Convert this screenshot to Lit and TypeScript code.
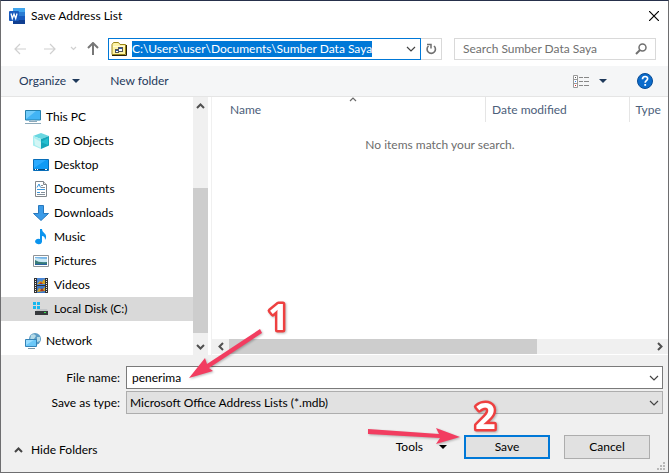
import { LitElement, html, css, svg } from "lit";
import { customElement, query } from "lit/decorators.js";
import { classMap } from "lit/directives/class-map.js";

const icon = (body: unknown, w = 16, h = 16) =>
  html`<svg class="icon" width=${w} height=${h} viewBox="0 0 ${w} ${h}" aria-hidden="true">${body}</svg>`;

const chevron = (d: string, w: number, h: number, cls = "") =>
  html`<svg class="icon ${cls}" width=${w} height=${h} viewBox="0 0 ${w} ${h}" aria-hidden="true"><path d=${d} fill="none" stroke="currentColor" stroke-width="1.200" /></svg>`;

const caret = () => icon(svg`<path d="M0 0h8L4 4z" fill="currentColor"/>`, 8, 4);
const comboArrow = () => chevron("M1 1l4 4 4-4", 10, 6, "combo");

const wordLogo = icon(svg`
  <path d="M4 0h12v4H4z" fill="#41a5ee"/><path d="M4 4h12v4H4z" fill="#2b7cd3"/>
  <path d="M4 8h12v4H4z" fill="#185abd"/><path d="M4 12h12v4H4z" fill="#103f91"/>
  <rect y="3" width="10" height="10" rx="1" fill="#185abd"/>
  <path d="M2 5.500l1.300 5L5 6l1.700 4.500L8 5.500" fill="none" stroke="#fff" stroke-width="1.300"/>`);

const sources = icon(svg`
  <path d="M1 13.500V3.500L2.500 1.500h5l1.500 2h5.500v10z" fill="#fdf3a4" stroke="#9b8518"/>
  <path d="M2 5h12v1H2z" fill="#fffbd9"/><path d="M1 14.500h14.500V4" fill="none" stroke="#28210a"/>
  <rect x="7.500" y="6.500" width="4" height="4" fill="#fff" stroke="#555"/>
  <rect x="4.500" y="8.500" width="3" height="3" fill="#fff" stroke="#555"/>
  <path d="M8 7.500h3M5 9.500h2" stroke="#2456b5"/>`);

const places = [
  { name: "This PC", root: true, art: svg`
    <path d="M.5 1.500h15v9.500H.5z" fill="#42b4f5" stroke="#2580ad"/><path d="M1 10L11 2H1z" fill="#72ccfb"/>
    <path d="M6 11h4v2H6z" fill="#a9c3d2"/><path d="M4 12.500h8M0 14.500h16" stroke="#8daabb"/>` },
  { name: "3D Objects", art: svg`
    <path d="M8 0l8 3-8 3-8-3z" fill="#69d7e1"/><path d="M0 3l8 3v10l-8-3.500z" fill="#a7eef0"/>
    <path d="M16 3L8 6v10l8-3.500z" fill="#16a5b9"/><path d="M1 5l7 4v6l-6-3z" fill="#d3f6f5"/><path d="M8 9l7-4v7z" fill="#24bfd0"/>` },
  { name: "Desktop", art: svg`
    <path d="M.5 2.500h15v11H.5z" fill="#0f9af5" stroke="#086db8"/><path d="M1 11L13 3H1z" fill="#2cabff"/>
    <path d="M1 12.500h14" stroke="#05467c"/><path d="M2 12.500h1m1 0h1m7 0h2" stroke="#fff"/>` },
  { name: "Documents", art: svg`
    <path d="M2.500.500h8l3 3v12h-11z" fill="#fff" stroke="#81868b"/><path d="M10.500.500v3h3" fill="#ddd" stroke="#81868b"/>
    <path d="M4 6.500l2-3.500 1.500 3.500M4 8.500h8M4 11.500h3" fill="none" stroke="#3a96dc"/><path d="M8 4.500h2M8 6.500h4M8 11.500h4M4 13.500h8" stroke="#84909b"/>` },
  { name: "Downloads", art: svg`<path d="M5.500.500h5v8h5L8 15.500.500 8.500h5z" fill="#3c9ce8" stroke="#2878bd"/>` },
  { name: "Music", art: svg`
    <path d="M7 0h2c0 4 5 4 4 9l-1 2c0-3-1-4-3-4v6a3.500 2.700 0 1 1-2-3z" fill="#0b94ee"/>` },
  { name: "Pictures", art: svg`
    <path d="M.5 2.500h15v11H.5z" fill="#fff" stroke="#8e9397"/><path d="M2 4h12v8H2z" fill="#79b7e8"/>
    <path d="M2 5q6 1 12 1v3H2z" fill="#cce9f5"/><path d="M2 7q4 3 12 2v3H2z" fill="#397c78"/><path d="M2 11h12v1H2z" fill="#2962a1"/>` },
  { name: "Videos", art: svg`
    <path d="M1 1h14v15H1z" fill="#333"/><path d="M4 1h8v7H4z" fill="#4a87d8"/><path d="M4 9h8v7H4z" fill="#3d78ca"/>
    <path d="M4 7l3-3 2 1 2-3 1 2v3zM4 15l2-4 3 2 3-3v4z" fill="#d6a422"/><path d="M8 5l2 2H6zm1 6l2 3H7z" fill="#ad3322"/>
    <path d="M2.500 2v13M13.500 2v13" stroke="#eee" stroke-dasharray="1 1"/>` },
  { name: "Local Disk (C:)", selected: true, art: svg`
    <path d="M0 1h3v3H0zm4 0h3v3H4zM0 5h3v3H0zm4 0h3v3H4z" fill="#16b7ef"/>
    <path d="M4 8h10l1 2H3z" fill="#c3c6c9"/><path d="M2 10h13v4H2z" fill="#373a3d"/><path d="M11 11.500h2" stroke="#38e452"/>` },
  { name: "Network", root: true, gap: true, art: svg`
    <circle cx="10" cy="6" r="6" fill="#5c9cc4"/><path d="M6 2q4-2 5 1l-2 3-4 1zM12 4l3 0v4l-3 1z" fill="#b5dbe8"/>
    <path d="M.5 6.500h11v7H.5z" fill="#6cc8f8" stroke="#3483b7"/><path d="M1 12l8-5H1z" fill="#99ddff"/>
    <path d="M3 15.500h7" stroke="#7795a6"/>` },
];

@customElement("app-root")
export class AppRoot extends LitElement {
  @query(".path") private path!: HTMLInputElement;

  static styles = css`
    :host { display: block; font: 12px/16px Lato, "Noto Sans", sans-serif; color: #000; }
    * { box-sizing: border-box; }
    button, input, select { font: inherit; color: inherit; margin: 0; padding: 0; border: 0; background: none; border-radius: 0; outline: none; }
    button { display: flex; align-items: center; }
    .icon { display: block; flex: none; }
    .dialog { display: flex; flex-direction: column; min-height: 100vh; border: 1px solid #6e6e70; border-top-color: #26304b; background: #fff; }
    .title { display: flex; align-items: center; gap: 6px; height: 30px; padding: 0 9px 0 8px; }
    h1 { flex: 1; margin: 0; font: inherit; }
    .nav { display: flex; align-items: center; height: 35px; padding: 0 12px 0 13px; color: #d0d0d0; }
    .arrows { display: flex; align-items: center; gap: 16px; width: 94px; }
    .arrows .recent { margin: 0 -6px 0 -2px; }
    .arrows .up { color: #777; }
    .address { display: flex; align-items: center; flex: 1; min-width: 0; height: 22px; border: 1px solid #0078d7; padding: 0 4px 0 2px; gap: 5px; color: #000; }
    .path { flex: 1; min-width: 0; height: 16px; }
    .path::selection { background: #0078d7; color: #fff; }
    .refresh { width: 21px; height: 22px; justify-content: center; border: 1px solid #d9d9d9; border-left: 0; color: #707070; }
    .search { display: flex; align-items: center; flex: 0 1 202px; min-width: 0; height: 22px; margin-left: 12px; padding: 0 8px; border: 1px solid #d9d9d9; color: #707070; }
    .search input { flex: 1; min-width: 0; }
    .search input::placeholder { color: #707070; opacity: 1; }
    .tools { display: flex; align-items: center; height: 31px; padding: 0 15px 0 18px; background: #f5f6f7; border-bottom: 1px solid #e5e5e5; color: #1e395b; }
    .tools button { gap: 6px; margin-right: 30px; }
    .tools .views { margin-left: auto; gap: 10px; }
    .tools .help { margin: 0; }
    .body { display: flex; flex: 1; min-height: 258px; }
    .side { display: flex; flex: none; width: 211px; padding-right: 3px; border-right: 1px solid #f0f0f0; }
    .tree { flex: 1; list-style: none; margin: 0; padding: 8px 0 2px; }
    .place { width: 100%; height: 24px; gap: 5px; padding-left: 32px; text-align: left; }
    .place.root { padding-left: 24px; }
    .place.selected { background: #d9d9d9; }
    .gap { margin-top: 8px; }
    .vbar { display: flex; flex-direction: column; width: 15px; background: #f0f0f0; color: #505050; }
    .vbar button { flex: none; justify-content: center; height: 17px; }
    .vtrack { display: flex; flex-direction: column; justify-content: flex-end; flex: 1; padding-bottom: 5px; }
    .vthumb { height: 66%; background: #cdcdcd; }
    .main { display: flex; flex: 1; flex-direction: column; min-width: 0; padding-bottom: 1px; }
    table { width: 100%; table-layout: fixed; border-collapse: collapse; color: #4c607a; }
    th { height: 25px; padding: 0 6px; font-weight: 400; text-align: left; border-right: 1px solid #e5e5e5; }
    th:first-child { width: 60%; padding-left: 18px; }
    th:last-child { width: 39px; border: 0; }
    th button { width: 100%; }
    .name { position: relative; }
    .sort { position: absolute; left: 50%; top: 0; color: #6b6b6b; }
    td { padding: 15px 0 0; text-align: center; color: #6d6d6d; }
    .hbar { display: flex; height: 15px; margin: auto 0 0; background: #f0f0f0; color: #505050; }
    .hbar button { flex: none; justify-content: center; width: 17px; }
    .htrack { flex: 1; }
    .hthumb { width: 73%; height: 15px; background: #cdcdcd; }
    .footer { position: relative; background: #f0f0f0; padding: 11px 5px 0 0; }
    .fields { display: grid; grid-template-columns: 119px 1fr; column-gap: 6px; row-gap: 2px; align-items: center; }
    .fields label { text-align: right; }
    .combo-box { position: relative; display: flex; height: 23px; }
    .combo-box input, .combo-box select { width: 100%; height: 23px; border: 1px solid #7a7a7a; background: #fff; padding: 0 20px 0 5px; }
    .combo-box select { appearance: none; border-color: #adadad; background: #e1e1e1; padding-left: 3px; }
    .combo { color: #444; }
    .combo-box .combo { position: absolute; right: 4px; top: 9px; pointer-events: none; }
    .actions { display: flex; align-items: center; height: 58px; padding: 8px 13px 0 13px; }
    .hide { gap: 8px; margin-top: 6px; }
    .menu { margin-left: auto; gap: 16px; }
    .push { justify-content: center; width: 86px; height: 24px; margin-left: 14px; border: 1px solid #adadad; background: #e1e1e1; }
    .primary { border: 2px solid #0078d7; margin-left: 17px; }
    .grip { position: absolute; right: 3px; bottom: 2px; }
    .note { position: absolute; overflow: visible; pointer-events: none; font: 700 36px "Noto Sans", "Open Sans", sans-serif; }
    .first { left: 186px; top: -58px; }
    .second { right: 113px; bottom: 29px; }
    .note text { fill: #fff; stroke: #ee4040; stroke-width: 5px; paint-order: stroke; stroke-linejoin: round; filter: drop-shadow(1px 1px 1px #0004); }
    .pointer { fill: #f23d60; filter: drop-shadow(1px 1px 1px #0004); }
  `;

  firstUpdated() {
    this.path.focus();
    this.path.select();
  }

  render() {
    return html`
      <main class="dialog">
        <header class="title">
          ${wordLogo}
          <h1>Save Address List</h1>
          <button aria-label="Close">${chevron("M0 0l10 10M10 0L0 10", 10, 10)}</button>
        </header>
        <nav class="nav">
          <div class="arrows">
            <button aria-label="Back">${chevron("M6 1L1 6l5 5M1 6h11", 13, 12)}</button>
            <button aria-label="Forward">${chevron("M7 1l5 5-5 5M12 6H1", 13, 12)}</button>
            <button class="recent" aria-label="Recent locations">${chevron("M1 1l2.500 2.500L6 1", 7, 5)}</button>
            <button class="up" aria-label="Up">${icon(svg`<path d="M1 6l5-5 5 5M6 1v12" fill="none" stroke="currentColor" stroke-width="2"/>`, 12, 13)}</button>
          </div>
          <div class="address">
            ${sources}
            <input class="path" aria-label="Address" value="C:\\Users\\user\\Documents\\Sumber Data Saya" spellcheck="false" />
            ${comboArrow()}
          </div>
          <button class="refresh" aria-label="Refresh">${icon(svg`<path d="M3.500 3A4.200 4.200 0 1 0 9 3" fill="none" stroke="currentColor" stroke-width="1.600"/><path d="M2 1.500h4v4" fill="none" stroke="currentColor" stroke-width="1.500"/>`, 12, 12)}</button>
          <div class="search">
            <input aria-label="Search" placeholder="Search Sumber Data Saya" />
            ${icon(svg`<circle cx="7.500" cy="4.500" r="3.500" fill="none" stroke="currentColor" stroke-width="1.500"/><path d="M5 7L1 11" stroke="currentColor" stroke-width="2"/>`, 12, 12)}
          </div>
        </nav>
        <div class="tools">
          <button>Organize ${caret()}</button>
          <button>New folder</button>
          <button class="views" aria-label="Change your view">
            ${icon(svg`<path d="M.5.500h4v12h-4zM.5 4.500h4m-4 4h4" fill="#fff" stroke="#999"/><path d="M2 2.500h1" stroke="#555"/><path d="M2 6.500h1" stroke="#38f"/><path d="M2 10.500h1" stroke="#d22"/><path d="M6 2.500h4m1 0h5M6 6.500h4m1 0h5M6 10.500h4m1 0h5" stroke="#888"/>`, 16, 13)}
            ${caret()}
          </button>
          <button class="help" aria-label="Help">
            ${icon(svg`<circle cx="8" cy="8" r="7.500" fill="#0b6bcb" stroke="#084b94"/><path d="M5.500 6.200q0-2.700 2.600-2.700t2.500 2.200q0 1-1.200 1.900T8.200 9.800" fill="none" stroke="#fff" stroke-width="1.700"/><path d="M7.300 11h1.800v1.800H7.300z" fill="#fff"/>`)}
          </button>
        </div>
        <div class="body">
          <aside class="side">
            <ul class="tree">
              ${places.map((p) => html`
                <li class=${classMap({ gap: !!p.gap })}>
                  <button class=${classMap({ place: true, root: !!p.root, selected: !!p.selected })}>${icon(p.art)}${p.name}</button>
                </li>`)}
            </ul>
            <div class="vbar">
              <button aria-label="Scroll up">${icon(svg`<path d="M1 5l3.500-3.500L8 5" fill="none" stroke="currentColor" stroke-width="2"/>`, 9, 6)}</button>
              <div class="vtrack"><div class="vthumb"></div></div>
              <button aria-label="Scroll down">${icon(svg`<path d="M1 1l3.500 3.500L8 1" fill="none" stroke="currentColor" stroke-width="2"/>`, 9, 6)}</button>
            </div>
          </aside>
          <section class="main">
            <table>
              <thead>
                <tr>
                  <th class="name"><button>Name</button>${chevron("M1 4l3-3 3 3", 8, 5, "sort")}</th>
                  <th><button>Date modified</button></th>
                  <th><button>Type</button></th>
                </tr>
              </thead>
              <tbody><tr><td colspan="3">No items match your search.</td></tr></tbody>
            </table>
            <div class="hbar">
              <button aria-label="Scroll left">${icon(svg`<path d="M5 1L1.500 4.500 5 8" fill="none" stroke="currentColor" stroke-width="2"/>`, 6, 9)}</button>
              <div class="htrack"><div class="hthumb"></div></div>
              <button aria-label="Scroll right">${icon(svg`<path d="M1 1l3.500 3.500L1 8" fill="none" stroke="currentColor" stroke-width="2"/>`, 6, 9)}</button>
            </div>
          </section>
        </div>
        <footer class="footer">
          <div class="fields">
            <label for="file">File name:</label>
            <div class="combo-box"><input id="file" value="penerima" spellcheck="false" />${comboArrow()}</div>
            <label for="type">Save as type:</label>
            <div class="combo-box"><select id="type"><option>Microsoft Office Address Lists (*.mdb)</option></select>${comboArrow()}</div>
          </div>
          <div class="actions">
            <button class="hide">${icon(svg`<path d="M1 5l3.500-3.500L8 5" fill="none" stroke="#444" stroke-width="2"/>`, 9, 6)} Hide Folders</button>
            <button class="menu">Tools ${caret()}</button>
            <button class="push primary">Save</button>
            <button class="push">Cancel</button>
          </div>
          <svg class="note first" width="104" height="84" viewBox="0 0 104 84">
            <path class="pointer" d="M73 32L75 36L22 71L26 74L2 81L18 61L20 67z" />
            <text x="81" y="33">1</text>
          </svg>
          <svg class="note second" width="187" height="44" viewBox="0 0 187 44">
            <path class="pointer" d="M0 30L71 35L68 29L92 38L68 45L72 39L0 35z" />
            <text x="107" y="30">2</text>
          </svg>
          <svg class="grip" width="8" height="8" viewBox="0 0 8 8" aria-hidden="true"><path d="M6 0h2v2H6zM3 3h2v2H3zM6 3h2v2H6zM0 6h2v2H0zM3 6h2v2H3zM6 6h2v2H6z" fill="#b8b8b8" /></svg>
        </footer>
      </main>`;
  }
}
